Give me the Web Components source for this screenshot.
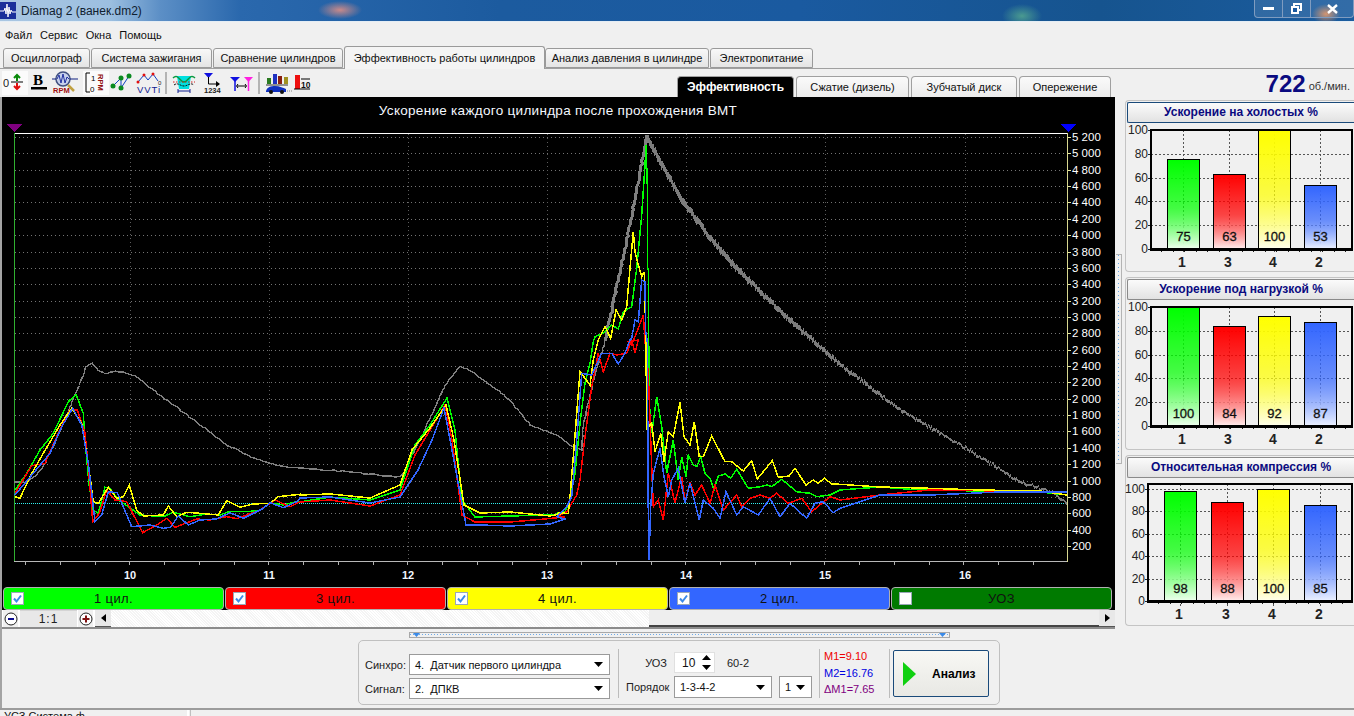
<!DOCTYPE html>
<html>
<head>
<meta charset="utf-8">
<title>Diamag 2</title>
<style>
html,body{margin:0;padding:0;height:716px;overflow:hidden;background:#f0f0f0}
body{font-family:"Liberation Sans",Arial,sans-serif;font-size:11px;color:#000;display:flex;flex-direction:column;width:1354px}
.main{display:flex;height:532px;flex:none;border-left:2px solid #a4a4a4}
.chartcol{width:1113px;display:flex;flex-direction:column;flex:none}
</style>
</head>
<body>
<win-title>Diamag 2 (ванек.dm2)</win-title>
<menu-bar><span>Файл</span><span>Сервис</span><span>Окна</span><span>Помощь</span></menu-bar>
<tab-strip>
  <tab-item w="87">Осциллограф</tab-item>
  <tab-item w="121">Система зажигания</tab-item>
  <tab-item w="130">Сравнение цилиндров</tab-item>
  <tab-item w="201" active>Эффективность работы цилиндров</tab-item>
  <tab-item w="164">Анализ давления в цилиндре</tab-item>
  <tab-item w="103">Электропитание</tab-item>
</tab-strip>
<tool-row>
  <sub-tab w="117" active>Эффективность</sub-tab>
  <sub-tab w="113">Сжатие (дизель)</sub-tab>
  <sub-tab w="106">Зубчатый диск</sub-tab>
  <sub-tab w="92">Опережение</sub-tab>
</tool-row>
<div class="main">
  <div class="chartcol">
    <osc-chart></osc-chart>
    <cyl-legend>
      <cyl-item color="#00ff00" checked>1 цил.</cyl-item>
      <cyl-item color="#ff0000" checked>3 цил.</cyl-item>
      <cyl-item color="#ffff00" checked>4 цил.</cyl-item>
      <cyl-item color="#3366ff" checked>2 цил.</cyl-item>
      <cyl-item color="#007a00">УОЗ</cyl-item>
    </cyl-legend>
    <zoom-scroll></zoom-scroll>
  </div>
  <side-grip></side-grip>
  <side-col>
    <bar-chart h="172" caption="Ускорение на холостых %" values="75,63,100,53" frame="26 5 227 124" scale="119" bars="42 88 133 179" focused></bar-chart>
    <bar-chart h="173" caption="Ускорение под нагрузкой %" values="100,84,92,87" frame="26 5 227 124" scale="119" bars="42 88 133 179"></bar-chart>
    <bar-chart h="171" caption="Относительная компрессия %" values="98,88,100,85" frame="23 4 227 121" scale="112" bars="39 86 132 179"></bar-chart>
  </side-col>
</div>
<analysis-bar></analysis-bar>
<status-line></status-line>

<script>
class WinTitle extends HTMLElement {
  constructor(){
    super()
    this.attachShadow({mode:'open'}).innerHTML = `
    <style>
    :host{display:flex;align-items:center;height:21px;flex:none;border-bottom:1px solid #e4edf5;box-sizing:content-box;
      background:
        radial-gradient(ellipse 22px 9px at 340px 10px,#c98a8a 0,transparent 100%),
        radial-gradient(ellipse 20px 12px at 1022px 16px,#4a9a90 0,transparent 100%),
        radial-gradient(ellipse 14px 10px at 1326px 14px,#d08a60 0,transparent 100%),
        linear-gradient(90deg,#a9c6e2 0,#9cbfe0 110px,#5c8fc6 160px,#2a68ad 240px,#1c5b9f 500px,#1a5aa0 800px,#16548f 1100px,#1b5c9e 1354px);
      font:12px "Liberation Sans",sans-serif;color:#10202f}
    svg{flex:none;margin-right:5px}
    .sp{flex:1}
    .ctl{display:flex;height:18px;align-self:flex-start;border:1px solid #7f9cc0;border-top:0;border-radius:0 0 4px 4px;width:100px;box-sizing:border-box;background:rgba(255,255,255,.1)}
    .ctl div{display:flex;align-items:center;justify-content:center;border-right:1px solid #7f9cc0}
    .ctl div:last-child{border:0}
    </style>
    <svg width="16" height="17" viewBox="0 0 16 17"><rect width="16" height="17" fill="#1a2f9a"/><path d="M0 9H4L5 6L6 12L7 2L8 15L9 5L10 12L11 8L12 10H16" stroke="#fff" fill="none"/></svg>
    <slot></slot><span class="sp"></span>
    <div class="ctl">
      <div style="width:27px"><svg style="margin:0" width="11" height="5"><rect y="1" width="11" height="3" fill="#fff"/></svg></div>
      <div style="width:27px"><svg style="margin:0" width="11" height="11" fill="none" stroke="#fff" stroke-width="2"><rect x="3" y="1" width="7" height="6"/><rect x="1" y="4" width="6" height="6" fill="#1a5aa0"/></svg></div>
      <div style="flex:1"><svg style="margin:0" width="11" height="10" stroke="#fff" stroke-width="2.4"><path d="M1 1L10 9M10 1L1 9"/></svg></div>
    </div>`
  }
}
customElements.define('win-title', WinTitle)

class MenuBar extends HTMLElement {
  constructor(){
    super()
    this.attachShadow({mode:'open'}).innerHTML = `
    <style>
    :host{display:flex;gap:8px;height:24px;padding:2px 0 0 5px;box-sizing:border-box;align-items:center;flex:none;font-size:11px;color:#111}
    </style><slot></slot>`
  }
}
customElements.define('menu-bar', MenuBar)

class TabStrip extends HTMLElement {
  constructor(){
    super()
    this.attachShadow({mode:'open'}).innerHTML = `
    <style>
    :host{display:flex;align-items:flex-end;gap:1px;height:23px;flex:none;padding-left:3px;box-sizing:border-box;border-bottom:1px solid #a0a0a0}
    </style><slot></slot>`
  }
}
customElements.define('tab-strip', TabStrip)

class TabItem extends HTMLElement {
  connectedCallback(){
    const on = this.hasAttribute('active')
    this.attachShadow({mode:'open'}).innerHTML = `
    <style>
    :host{display:flex;align-items:center;justify-content:center;box-sizing:border-box;flex:none;width:${this.getAttribute('w')}px;white-space:nowrap;
      height:${on?23:20}px;margin-bottom:${on?-1:0}px;margin-right:${on?-1:0}px;
      border:1px solid #9a9a9a;border-bottom:${on?'0':'1px solid #9a9a9a'};border-radius:3px 3px 0 0;
      background:${on?'#f4f4f4':'linear-gradient(#f8f8f8,#e4e4e4)'};font-size:11px;color:#111;position:relative}
    </style><slot></slot>`
  }
}
customElements.define('tab-item', TabItem)

const toolIcons = [
  [26,`<text x="1" y="16" font-size="11" fill="#222">0</text><path d="M9 11H21" stroke="#000"/><path d="M15 5V10M12 7L15 4L18 7" stroke="#0a8a0a" stroke-width="2" fill="none"/><path d="M15 12V18M12 15L15 18L18 15" stroke="#e01010" stroke-width="2" fill="none"/>`,true],
  [24,`<text x="5" y="14" font-size="15" font-weight="700" style="font-family:'Liberation Serif',serif" fill="#000">B</text><rect x="3" y="16" width="16" height="2.5"/>`],
  [31,`<circle cx="11" cy="8" r="7" fill="#c6d0ec" stroke="#405080" stroke-width="1.5"/><path d="M0 8H4M18 8H26" stroke="#102080"/><path d="M5 8L7 4L9 12L11 3L13 12L15 6L17 8" fill="none" stroke="#2030a0"/><path d="M16 14L22 20" stroke="#c0a040" stroke-width="2.5"/><text x="1" y="22" font-size="7.5" fill="#a01010" font-weight="700">RPM</text>`],
  [26,`<path d="M7 2H3V21H7" fill="none" stroke="#000"/><text x="8" y="10" font-size="8" fill="#000">1</text><text x="7" y="21" font-size="8" fill="#000">0</text><text transform="translate(15,3) rotate(90)" font-size="7.5" fill="#901010" font-weight="700">RPM</text>`,true],
  [26,`<path d="M3 16L12 7L12 17L20 5" fill="none" stroke="#1040c0"/><circle cx="4" cy="15" r="2.5" fill="#0a8a20"/><circle cx="12" cy="7" r="2.5" fill="#0a8a20"/><circle cx="12" cy="17" r="2.5" fill="#0a8a20"/><circle cx="20" cy="5" r="2.5" fill="#0a8a20"/>`],
  [28,`<path d="M3 11L9 4L13 9L18 3L23 10" fill="none" stroke="#1040c0"/><circle cx="3" cy="11" r="1.5" fill="#e01010"/><circle cx="9" cy="4" r="1.5" fill="#e01010"/><circle cx="18" cy="3" r="1.5" fill="#e01010"/><text x="23" y="14" font-size="6" fill="#222">0</text><text x="2" y="22" font-size="9.5" fill="#102090" textLength="23">VVTi</text>`],
  'sep',
  [34,`<path d="M9 5H23L21 18H11Z" fill="#00e0e0"/><path d="M5 7C10 2 12 11 16 11C20 11 22 2 27 7" fill="none" stroke="#0a9a40" stroke-width="1.5"/><path d="M5 11H27" stroke="#d02020" stroke-dasharray="1.5 1.5"/><path d="M6 14C10 11 12 15 16 15C20 15 22 11 26 14" fill="none" stroke="#111" stroke-dasharray="2 1"/><path d="M10 20H22M10 18V22M22 18V22" stroke="#102090"/>`],
  [21,`<path d="M2 2H11L6.5 7Z" fill="#1010e0"/><path d="M6.5 6V13H17" stroke="#000" fill="none"/><path d="M14 10L18 13L14 16Z"/><text x="2" y="22" font-size="7.5" font-weight="700" fill="#222">1234</text>`],
  [33,`<path d="M7 6H17L12 11Z" fill="#1010e0"/><path d="M12 10V20" stroke="#1010e0" stroke-width="1.5"/><path d="M21 6H30L25.5 11Z" fill="#ff20e0"/><path d="M25.5 10V20" stroke="#ff20e0" stroke-width="1.5"/><path d="M14 15H23M15 13L13.5 15L15 17M22 13L23.5 15L22 17" stroke="#000" fill="none"/>`],
  'sep',
  [32,`<rect x="6" y="7" width="4" height="6" fill="#2a7a20"/><rect x="12" y="3" width="4" height="10" fill="#2030c0"/><rect x="17" y="5" width="4" height="8" fill="#8a2010"/><rect x="23" y="6" width="4" height="7" fill="#a09020"/><path d="M5 14H27" stroke="#333"/><path d="M5 20C6 16 10 15 14 15C19 15 22 17 25 18V21H5Z" fill="#1030c0"/><circle cx="10" cy="21" r="2" fill="#111"/><circle cx="21" cy="21" r="2" fill="#111"/><path d="M26 20H31" stroke="#888" stroke-dasharray="1 1"/>`],
  [20,`<rect x="2" y="4" width="5" height="14" fill="#ee1010"/><path d="M1 18H17M8 8H17" stroke="#000" fill="none"/><text x="8" y="17" font-size="8.5" font-weight="700" fill="#111">10</text>`]
]
class ToolRow extends HTMLElement {
  constructor(){
    super()
    const btns = toolIcons.map(t => {
      if(t == 'sep') return '<i class="sep"></i>'
      return `<b class="${t[2]?'on':''}" style="width:${t[0]}px"><svg width="${t[0]}" height="24" viewBox="0 0 ${t[0]} 24">${t[1]}</svg></b>`
    }).join('')
    this.attachShadow({mode:'open'}).innerHTML = `
    <style>
    :host{display:flex;height:28px;flex:none;box-sizing:border-box;padding-left:2px;align-items:stretch;font-size:12px}
    .tools{display:flex;align-items:center;width:675px;flex:none;font-family:"Liberation Sans",sans-serif}
    b{display:block;height:24px;font-weight:400}
    b.on{background:#fbfbfb}
    .sep{display:block;width:2px;height:22px;margin:0 1px 0 2px;background:#b4b4b4;flex:none}
    .subs{display:flex;gap:2px;align-items:flex-end;flex:none}
    .rpm{flex:1;display:flex;align-items:flex-end;justify-content:flex-end;padding:0 4px 0 0;color:#333;font-size:11px}
    .rpm strong{font-size:24px;line-height:27px;color:#0a0a80;margin-right:3px}
    .rpm span{line-height:22px}
    </style>
    <div class="tools">${btns}</div>
    <div class="subs"><slot></slot></div>
    <div class="rpm"><strong>722</strong><span>об./мин.</span></div>`
  }
}
customElements.define('tool-row', ToolRow)

class SubTab extends HTMLElement {
  connectedCallback(){
    const on = this.hasAttribute('active')
    this.attachShadow({mode:'open'}).innerHTML = `
    <style>
    :host{display:flex;align-items:center;justify-content:center;box-sizing:border-box;width:${this.getAttribute('w')}px;height:21px;
      border:1px solid #a0a0a0;border-bottom:0;border-radius:4px 4px 0 0;font-size:${on?12:11}px;
      background:${on?'#000':'linear-gradient(#fafafa,#ececec)'};color:${on?'#fff':'#111'};font-weight:${on?700:400}}
    </style><slot></slot>`
  }
}
customElements.define('sub-tab', SubTab)

// все точки трасс снимались с экрана
const fromZoom = (s, ox, oy) => s.trim().split(/\s+/).map(p => {
  const a = p.split(',')
  return [ox + a[0]/3, oy + a[1]/3]
})
const screen = s => s.trim().split(/\s+/).map(p => p.split(',').map(Number))
const trace = (a, b, c, d, e, f) => [].concat(
  fromZoom(a,0,350), screen(b), fromZoom(c,540,340), fromZoom(d,560,125), fromZoom(e,540,340), screen(f)
)
const traces = [
 ['#00ff00', trace(
  '45,420 80,370 120,300 160,250 205,155 228,133 250,190 255,270 268,410 280,480 295,490 315,412 330,415 355,450 385,470 420,495 450,497 490,500 520,487 570,500 620,492 660,495 690,484 750,484 780,482 810,458 850,465 890,455',
  '300,502 330,497 370,500 400,490 415,445 430,425 447,398 455,430 462,500 475,517 510,516 550,515 565,513',
  '50,520 75,515 90,480 105,400 120,250 135,130 150,70',
  '100,650 105,635 130,625 155,600 175,612 190,560 215,545 230,430 245,270 255,120 258,60 262,180 263,430 265,435 266,650',
  '330,250 335,280 350,170 365,260 380,400 400,300 415,420 425,350 438,410 445,345 460,375 470,380 482,350 495,400 510,415 522,450 535,408 555,402 572,415 590,388 625,445 660,440 680,435 695,440 725,418 770,455 810,460 830,470 870,465 900,450',
  '880,487 920,490 980,491 1040,492 1067,495')],
 ['#ff0000', trace(
  '45,430 95,347 135,340 170,260 210,178 232,180 255,250 265,350 278,515 298,490 320,420 345,450 380,455 428,548 470,525 500,505 525,532 590,507 630,510 680,500 710,506 780,480 825,450 870,470 900,455',
  '300,502 330,500 370,506 400,495 415,455 430,430 445,405 452,440 462,515 475,522 510,522 545,519 565,517',
  '50,530 80,515 110,465 120,420 135,290 155,140 175,40 190,95 210,40 230,45 260,40 275,0 285,40 295,0',
  '205,650 215,660 235,610 250,570 255,650',
  '325,100 335,380 340,500 355,480 370,540 385,400 405,490 425,410 435,485 450,428 465,465 485,435 510,490 525,435 550,510 590,465 605,500 630,475 660,465 690,475 710,460 745,490 785,475 815,515 870,470 900,480',
  '880,495 930,490 1000,491 1067,492')],
 ['#ffff00', trace(
  '45,440 60,445 90,380 130,310 180,225 215,175 245,220 265,340 280,455 295,460 325,412 350,445 370,440 388,406 410,480 430,498 490,495 505,468 530,500 560,487 600,490 655,495 680,452 720,472 760,462 810,460 835,440 900,433',
  '300,495 330,494 370,498 400,485 412,450 430,428 446,405 454,440 464,505 480,513 510,512 550,516 565,513',
  '50,520 85,520 90,470 100,350 120,95 150,135 160,60 175,0',
  '112,650 135,605 152,640 168,555 185,585 200,545 210,430 220,320 225,380 235,420 245,455 253,440 258,660',
  '320,265 335,250 345,335 362,280 372,365 385,275 400,290 420,187 432,290 450,315 463,245 478,350 490,350 515,288 555,365 575,365 610,393 635,362 652,417 697,362 715,412 747,408 765,385 798,435 820,420 835,430 853,415 875,432 900,433',
  '880,487 920,488 980,490 1040,491 1067,495')],
 ['#3366ff', trace(
  '45,435 100,370 150,310 185,230 218,175 245,225 265,340 285,515 305,495 325,425 352,428 395,530 450,525 490,535 512,532 535,498 565,525 600,510 650,507 690,488 730,505 790,475 810,458 850,473 890,455',
  '300,498 330,497 370,503 400,497 418,470 432,440 444,408 452,450 466,525 480,525 510,526 550,524 565,519',
  '50,530 80,500 95,470 110,300 125,100 155,105 185,40 215,40 235,72 255,40 270,0',
  '215,640 225,585 235,590 245,465 255,470 257,620 262,650',
  '325,520 327,660 332,500 340,400 360,325 372,410 385,470 395,420 415,385 435,490 450,430 478,540 490,480 520,505 540,535 558,455 590,525 610,500 655,525 690,475 720,530 750,490 800,535 825,490 850,485 880,518 900,505',
  '880,495 930,495 1000,492 1067,492')]
]
const grayThin = screen('14,482 27,482 37,475 47,460 57,438 67,415 75,395 80,383 86,367 92,363 98,370 105,374 115,371 127,373 137,377 147,385 157,393 170,402 187,415 207,430 227,445 247,455 267,463 287,467 300,468 340,471 380,475 400,477 405,470 420,440 445,385 460,367 470,370 490,385 510,400 530,425 557,435 573,447 582,450 583,427 593,383 605,340')
const grayRise = screen('605,340 610,318 620,272 630,225 640,172 647,135')
const grayDown = [[647,138],[660,162],[680,198],[710,238],[733,265],[760,292],[797,327],[840,365],[900,410],[960,445],[1020,482],[1050,492],[1067,503]]

class OscChart extends HTMLElement {
  constructor(){
    super()
    const pts = a => a.map(p => p[0].toFixed(1)+','+p[1].toFixed(1)).join(' ')
    let seed = 7
    const rnd = () => (seed = (seed*16807) % 2147483647) / 2147483647
    // серая линия из прибора идет ступеньками
    const jag = (a, amp) => {
      const out = []
      for(let i = 0; i < a.length-1; i++){
        const n = Math.ceil(Math.hypot(a[i+1][0]-a[i][0], a[i+1][1]-a[i][1])/3)
        for(let k = 0; k < n; k++){
          out.push([a[i][0]+(a[i+1][0]-a[i][0])*k/n+(rnd()-.5)*amp, a[i][1]+(a[i+1][1]-a[i][1])*k/n+(rnd()-.5)*amp])
        }
      }
      out.push(a[a.length-1])
      return out
    }
    let grid = '', labels = '', ticks = ''
    for(let v = 200; v <= 5200; v += 200){
      const y = Math.round(546 - (v-200)*0.0818)
      grid += `<path d="M15 ${y}.5H1067" stroke="#747474" stroke-dasharray="1 3"/><path d="M1067 ${y}.5H1071" stroke="#e8e8a0"/>`
      const s = v >= 1000 ? Math.floor(v/1000)+' '+String(v%1000).padStart(3,'0') : v
      labels += `<text x="1072" y="${y+4}" font-size="11.5" fill="#fff">${s}</text>`
    }
    for(let i = 0; i < 7; i++){
      const x = 130 + i*139 + (i == 6 ? 1 : 0)
      grid += `<path d="M${x}.5 134V561" stroke="#5c5c5c" stroke-dasharray="1 3"/>`
      labels += `<text x="${x}" y="579" font-size="11" font-weight="700" fill="#f0f6ff" text-anchor="middle">${10+i}</text>`
    }
    for(let x = 25; x < 1067; x += 34.75) ticks += `<path d="M${Math.round(x)}.5 561V565" stroke="#b0b0b0"/>`
    // после пика линия широкая и рваная
    let thick = ''
    for(let x = 647; x < 1067; x++){
      let i = 0
      while(grayDown[i+1][0] <= x) i++
      const a = grayDown[i], b = grayDown[i+1]
      const y = a[1] + (b[1]-a[1])*(x-a[0])/(b[0]-a[0])
      const h = Math.max(1.5, 7 - (x-647)/50) + rnd()*2
      thick += `M${x}.5 ${(y-h/2+(rnd()-.5)*3).toFixed(0)}v${h.toFixed(0)}`
    }
    const lines = traces.map(t => `<polyline points="${pts(t[1])}" fill="none" stroke="${t[0]}" stroke-width="1.5"/>`).join('')
    this.attachShadow({mode:'open'}).innerHTML = `
    <style>
    :host{display:block;height:489px;flex:none;background:#000}
    svg{display:block;font-family:"Liberation Sans",sans-serif}
    </style>
    <svg width="1113" height="489" viewBox="2 97 1113 489" shape-rendering="crispEdges">
      <text x="558" y="115" font-size="13.5" fill="#f4f8ff" text-anchor="middle" letter-spacing=".3">Ускорение каждого цилиндра после прохождения ВМТ</text>
      <path d="M6 124H22L14 132Z" fill="#800080"/><path d="M1060 124H1076L1068 132Z" fill="#0000ff"/>
      ${grid}
      <path d="M14 133.5H1067" stroke="#fff"/><path d="M14.5 133V562" stroke="#30b030"/>
      <path d="M14 561.5H1067" stroke="#b8b8b8"/><path d="M1067.5 133V562" stroke="#d8d890"/>
      ${ticks}${labels}
      <path d="M15 503.5H1067" stroke="#30f0f0" stroke-dasharray="1 1"/>
      <polyline points="${pts(jag(grayThin,1.2))}" fill="none" stroke="#808080" stroke-width="1.4"/>
      <polyline points="${pts(jag(grayRise,1.6))}" fill="none" stroke="#808080" stroke-width="3"/>
      <path d="${thick}" stroke="#7c7c7c" fill="none"/>
      ${lines}
    </svg>`
  }
}
customElements.define('osc-chart', OscChart)

class CylLegend extends HTMLElement {
  constructor(){
    super()
    this.attachShadow({mode:'open'}).innerHTML = `
    <style>
    :host{display:grid;grid-template-columns:222px 222px 222px 222px 222px;height:24px;flex:none;background:#000;padding-left:1px;box-sizing:border-box;overflow:hidden}
    </style><slot></slot>`
  }
}
customElements.define('cyl-legend', CylLegend)

class CylItem extends HTMLElement {
  connectedCallback(){
    const on = this.hasAttribute('checked')
    this.attachShadow({mode:'open'}).innerHTML = `
    <style>
    :host{display:flex;align-items:center;justify-content:center;position:relative;box-sizing:border-box;height:23px;margin-right:1px;margin-top:1px;
      background:${this.getAttribute('color')};border:1px solid #b0b0b0;border-radius:4px;font-size:13px;letter-spacing:.4px;color:#111}
    svg{position:absolute;left:7px;top:4px}
    </style>
    <svg width="13" height="13"><rect x=".5" y=".5" width="12" height="12" fill="#fff" stroke="#9aa8b8"/>${on?'<path d="M3 6.5L5.5 9.5L10 3.5" fill="none" stroke="#3a8ae8" stroke-width="2"/>':''}</svg>
    <slot></slot>`
  }
}
customElements.define('cyl-item', CylItem)

class ZoomScroll extends HTMLElement {
  constructor(){
    super()
    this.attachShadow({mode:'open'}).innerHTML = `
    <style>
    :host{display:flex;height:19px;flex:none;align-items:stretch;box-sizing:border-box;border-bottom:2px solid #8c8c8c;padding-left:1px;background:#fff;font-size:12px}
    .r{width:15px;background:#f0f0f0;display:flex;align-items:center;justify-content:center;flex:none}
    .z{width:57px;margin:0 1px 0 2px;background:#e8e8e8;text-align:center;line-height:17px;letter-spacing:1px;border-top:1px solid #d4d4d4;flex:none;color:#222}
    .b{width:16px;background:#e8e8e8;display:flex;align-items:center;justify-content:center;border-bottom:1px solid #555;flex:none;margin-left:2px}
    .t{width:538px;flex:none;background:repeating-linear-gradient(45deg,#f4f4f4 0 1px,#fff 1px 2px)}
    .h{flex:1;background:#eeeeee;border-bottom:2px solid #444}
    </style>
    <div class="r"><svg width="14" height="14"><circle cx="7" cy="7" r="6" fill="#fff" stroke="#222"/><path d="M4 7H10" stroke="#0a0a90" stroke-width="2"/></svg></div>
    <div class="z">1:1</div>
    <div class="r"><svg width="14" height="14"><circle cx="7" cy="7" r="6" fill="#fff" stroke="#222"/><path d="M3.5 7H10.500M7 3.500V10.500" stroke="#801010" stroke-width="2"/></svg></div>
    <div class="b"><svg width="5" height="8"><path d="M5 0V8L0 4Z"/></svg></div>
    <div class="t"></div>
    <div class="h"></div>
    <div class="b" style="margin:0"><svg width="5" height="8"><path d="M0 0V8L5 4Z"/></svg></div>`
  }
}
customElements.define('zoom-scroll', ZoomScroll)

class SideGrip extends HTMLElement {
  constructor(){
    super()
    this.attachShadow({mode:'open'}).innerHTML = `
    <style>
    :host{display:flex;width:10px;flex:none;align-items:center}
    div{width:6px;height:210px;margin-top:-8px;box-sizing:border-box;border:1px solid #b4b4b4;border-left:0;margin-left:1px;
      background:repeating-linear-gradient(#6aa8e8 0 1px,transparent 1px 4px) 2px 0/1px 100% no-repeat}
    </style><div></div>`
  }
}
customElements.define('side-grip', SideGrip)

class SideCol extends HTMLElement {
  constructor(){
    super()
    this.attachShadow({mode:'open'}).innerHTML = `
    <style>
    :host{display:flex;flex-direction:column;gap:5px;flex:none;width:229px;padding-top:3px;box-sizing:border-box}
    </style><slot></slot>`
  }
}
customElements.define('side-col', SideCol)

const barFill = {0:['g','#00ff00','#eaffea'],1:['r','#ff0000','#ffe8e8'],2:['y','#ffff00','#ffffe8'],3:['b','#3366ff','#e8eeff']}
class BarChart extends HTMLElement {
  connectedCallback(){
    const vals = this.getAttribute('values').split(',').map(Number)
    const f = this.getAttribute('frame').split(' ').map(Number)
    const bx = this.getAttribute('bars').split(' ').map(Number)
    const names = ['1','3','4','2']
    const H = Number(this.getAttribute('scale'))
    let s = '', grads = ''
    for(const k in barFill){
      const g = barFill[k]
      grads += `<linearGradient id="${g[0]}" x1="0" y1="0" x2="0" y2="1"><stop offset="0" stop-color="${g[1]}"/><stop offset=".55" stop-color="${g[1]}" stop-opacity=".72"/><stop offset="1" stop-color="${g[2]}"/></linearGradient>`
    }
    for(let v = 0; v <= 100; v += 5){
      const y = Math.round(f[3]-v*H/100)
      const big = v%20 == 0
      s += `<path d="M${f[0]-(big?3:1.500)} ${y}.5H${f[0]}" stroke="#222"/>`
      if(big){
        if(v) s += `<path d="M${f[0]} ${y}.5H${f[2]}" stroke="#555" stroke-dasharray="1.500 2.500"/>`
        s += `<text x="${f[0]-3}" y="${y+4}" font-size="12" fill="#222" text-anchor="end">${v}</text>`
      }
    }
    for(let x = f[0]+10; x < f[2]; x += 11.500) s += `<path d="M${Math.round(x)}.5 ${f[3]}V${f[3]+3}" stroke="#222"/>`
    bx.forEach((x,i) => {
      const c = x+16
      s += `<path d="M${c}.5 ${f[1]}V${f[3]+5}" stroke="#555" stroke-dasharray="1.500 2.500"/>`
    })
    s += `<rect x="${f[0]}" y="${f[1]}" width="${f[2]-f[0]}" height="${f[3]-f[1]}" fill="none" stroke="#000" stroke-width="1.500"/><path d="M${f[0]} ${f[1]}V${f[3]+1}H${f[2]+1}" fill="none" stroke="#000" stroke-width="2"/>`
    bx.forEach((x,i) => {
      const top = f[3]-vals[i]*H/100
      s += `<rect x="${x}.5" y="${top}" width="32" height="${f[3]-top-1}" fill="url(#${barFill[i][0]})" stroke="#000"/>`
      s += `<text x="${x+16.500}" y="${f[3]-8}" font-size="13" fill="#111" text-anchor="middle" stroke="#111" stroke-width=".3">${vals[i]}</text>`
      s += `<text x="${x+15}" y="${f[3]+18}" font-size="14" font-weight="700" fill="#222" text-anchor="middle">${names[i]}</text>`
    })
    const foc = this.hasAttribute('focused')
    this.attachShadow({mode:'open'}).innerHTML = `
    <style>
    :host{display:block;box-sizing:border-box;height:${this.getAttribute('h')}px;border:1px solid #c4c4c4;border-right:0;border-radius:4px 0 0 4px;padding:1px 0 0 1px;flex:none}
    .cap{height:21px;box-sizing:border-box;border:1px solid ${foc?'#1a4a7a':'#8a8a8a'};border-right:0;border-radius:2px 0 0 2px;background:linear-gradient(#fbfbfb,#e2e2e2);
      text-align:center;font-weight:700;font-size:12px;line-height:19px;color:#0a0a80}
    svg{display:block;margin:2px 0 0 -2px;overflow:visible;font-family:"Liberation Sans",sans-serif}
    </style>
    <div class="cap">${this.getAttribute('caption')}</div>
    <svg width="229" height="146" viewBox="0 0 229 146" shape-rendering="crispEdges"><defs>${grads}</defs>${s}</svg>`
  }
}
customElements.define('bar-chart', BarChart)

class ComboBox extends HTMLElement {
  connectedCallback(){
    this.attachShadow({mode:'open'}).innerHTML = `
    <style>
    :host{display:flex;align-items:center;box-sizing:border-box;width:${this.getAttribute('w')}px;height:${this.getAttribute('h')||22}px;flex:none;background:#fff;border:1px solid #9a9a9a;padding:0 6px 0 5px;font-size:11px;color:#111}
    span{flex:1;white-space:pre}
    </style>
    <span><slot></slot></span>
    <svg width="9" height="5"><path d="M0 0H9L4.500 5Z" fill="#000"/></svg>`
  }
}
customElements.define('combo-box', ComboBox)

class AnalysisBar extends HTMLElement {
  constructor(){
    super()
    this.attachShadow({mode:'open'}).innerHTML = `
    <style>
    :host{display:flex;flex-direction:column;align-items:flex-start;height:79px;flex:none;box-sizing:border-box;border-left:2px solid #a4a4a4;font-size:11px;color:#222}
    .split{width:541px;height:6px;margin:3px 0 0 407px;box-sizing:border-box;border:1px solid #a8a8a8;display:flex;justify-content:space-between;align-items:center;padding:0 3px;
      background:repeating-linear-gradient(90deg,#6aa8e8 0 1px,transparent 1px 3px) 0 1px/100% 1px no-repeat}
    .split svg{display:block}
    .box{width:642px;height:65px;margin:2px 0 0 356px;box-sizing:border-box;border:1px solid #c0c0c0;border-radius:5px;display:flex;align-items:stretch}
    .col1{display:grid;grid-template-columns:44px 201px;row-gap:3px;align-content:start;padding:13px 0 0 6px;align-items:center}
    .sep{width:1px;background:#bcbcbc;margin:8px 0 6px;flex:none}
    .col2{display:grid;grid-template-columns:41px auto auto;column-gap:7px;row-gap:3px;padding:11px 0 0 7px;align-content:start;justify-content:start;align-items:center;width:200px;box-sizing:border-box}
    .right{text-align:right}
    .spin{display:flex;align-items:center;justify-content:space-between;box-sizing:border-box;width:41px;height:21px;background:#fff;border:1px solid #e0e0e0;padding:0 3px 0 7px;font-size:12px;color:#111}
    .spin svg{display:block}
    .m{width:69px;padding:7px 0 0 4px;box-sizing:border-box;line-height:16.500px;flex:none}
    .go{width:96px;height:47px;margin:9px 0 0 3px;box-sizing:border-box;border:1px solid #1a4a7a;border-radius:2px;background:linear-gradient(#f8f8f4,#e8e8e4);display:flex;align-items:center;padding-left:9px;font-weight:700;font-size:12px;color:#000;gap:16px;flex:none}
    </style>
    <div class="split">
      <svg width="7" height="4"><path d="M0 0H7L3.500 4Z" fill="#3a8ae8"/></svg>
      <svg width="7" height="4"><path d="M0 0H7L3.500 4Z" fill="#3a8ae8"/></svg>
    </div>
    <div class="box">
      <div class="col1">
        <span>Синхро:</span><combo-box w="201" h="21">4.  Датчик первого цилиндра</combo-box>
        <span>Сигнал:</span><combo-box w="201" h="21">2.  ДПКВ</combo-box>
      </div>
      <div class="sep" style="margin-left:8px"></div>
      <div class="col2">
        <span class="right">УОЗ</span>
        <div style="display:flex;align-items:center;gap:12px;grid-column:2 / 4"><div class="spin">10<svg width="9" height="17"><path d="M4.500 1L9 6H0ZM4.500 16L0 11H9Z" fill="#000"/></svg></div><span>60-2</span></div>
        <span class="right">Порядок</span>
        <combo-box w="98">1-3-4-2</combo-box>
        <combo-box w="33">1</combo-box>
      </div>
      <div class="sep"></div>
      <div class="m">
        <div style="color:#ee0000">M1=9.10</div>
        <div style="color:#0000e0">M2=16.76</div>
        <div style="color:#800080">ΔM1=7.65</div>
      </div>
      <div class="sep"></div>
      <div class="go">
        <svg width="13" height="24"><path d="M0 0L13 12L0 24Z" fill="#10d010"/></svg>Анализ
      </div>
    </div>`
  }
}
customElements.define('analysis-bar', AnalysisBar)

class StatusLine extends HTMLElement {
  constructor(){
    super()
    this.attachShadow({mode:'open'}).innerHTML = `
    <style>
    :host{display:flex;height:8px;flex:none;border-top:2px solid #9c9c9c;overflow:hidden;font-size:11px;line-height:14px;color:#111;box-sizing:border-box}
    div{width:189px;flex:none;border-right:2px solid #fff;padding-left:4px;margin-top:-1px;white-space:nowrap;overflow:hidden;box-sizing:border-box}
    i{flex:1;border-left:1px solid #c0c0c0;margin-left:1px}
    </style>
    <div>УСЗ Система ф</div><i></i>`
  }
}
customElements.define('status-line', StatusLine)
</script>
</body>
</html>
